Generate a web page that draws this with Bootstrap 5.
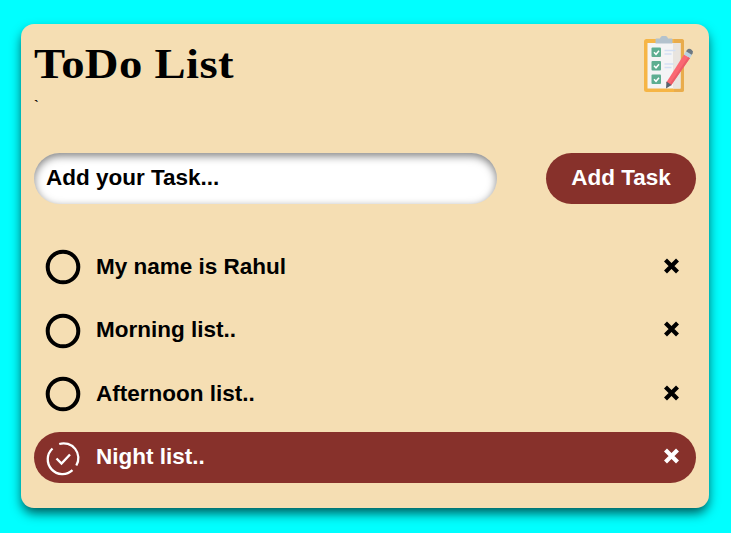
<!DOCTYPE html>
<html lang="en">
<head>
<meta charset="utf-8">
<meta name="viewport" content="width=device-width, initial-scale=1">
<title>ToDo List</title>
<link href="https://cdn.jsdelivr.net/npm/bootstrap@5.3.0/dist/css/bootstrap.min.css" rel="stylesheet">
<style>
body{background:#0ff;font-family:"Liberation Sans",Arial,sans-serif;color:#000;height:533px;overflow:hidden}
.todo-panel{margin:24px 22px 0 21px;height:484px;border-radius:13px;background:#f5deb3;padding:12px 13px 0;box-shadow:0 6px 12px -1px rgba(0,0,0,.68)}
.todo-head{height:60px}
.todo-title{font:bold 41.5px/56px "Liberation Serif",Georgia,serif;letter-spacing:.3px;transform:scaleX(1.125);transform-origin:left;white-space:nowrap}
.stray{font:bold 14px/20px "Liberation Serif",serif;height:57px}
.entry-field{width:463px;height:51px;border:0;border-radius:26px;background:#fff;padding:0 12px 1px;font-weight:bold;font-size:22.5px;color:#000;box-shadow:inset 0 3px 8px rgba(0,0,0,.5);outline:0}
.entry-field::placeholder{color:#000;opacity:1}
.add-task,.add-task:hover{width:150px;height:51px;border:0;border-radius:26px;background:#87312b;color:#fff;font-weight:bold;font-size:22.5px;padding:0 0 1px}
.task-list{margin-top:37.5px;gap:12.5px}
.task-row{height:51px;border-radius:26px;padding:0 16px 0 11px;font-weight:bold;font-size:22.5px;line-height:48px}
.task-row svg{display:block}
.task-row.done{background:#87312b;color:#fff}
.ring{width:36px;height:36px;margin-right:15px}
.task-text{padding-bottom:1px}
.cross{width:17px;height:16px;margin-bottom:3px}
.cross path{stroke:currentColor;stroke-width:4.2;stroke-linecap:butt}
</style>
<script src="https://cdn.jsdelivr.net/npm/bootstrap@5.3.0/dist/js/bootstrap.bundle.min.js"></script>
</head>
<body>
<main class="todo-panel">
  <header class="todo-head d-flex justify-content-between align-items-start">
    <h1 class="todo-title m-0">ToDo List</h1>
    <svg width="52" height="60" viewBox="0 0 52 60">
      <rect x="0" y="3" width="40" height="53" rx="2.500" fill="#f6b545"/>
      <path d="M30 3h7.500a2.500 2.500 0 0 1 2.500 2.500v48a2.500 2.500 0 0 1-2.500 2.500H30z" fill="#e9ac4c"/>
      <path d="M3.500 7h33v45.500h-33z" fill="#f4f4f5"/><path d="M29 7h7.500v45.500H29z" fill="#e8e4df"/>
      <path d="M11.500 7.500V3.500q0-1 1-1H16c1-4 7-4 8 0h3.500q1 0 1 1v4z" fill="#b3c2cd"/>
      <g fill="#5dae91"><rect x="7.500" y="11.500" width="9.500" height="9.500" rx="1"/><rect x="7.500" y="25" width="9.500" height="9.500" rx="1"/><rect x="7.500" y="38.500" width="9.500" height="9.500" rx="1"/></g>
      <path d="M10 16.300l2 2 3-3.500M10 29.800l2 2 3-3.500M10 43.300l2 2 3-3.500" fill="none" stroke="#fff" stroke-width="1.500"/>
      <path d="M20.500 14.500h11M20.500 18h7M20.500 28h9M20.500 31.500h7" stroke="#d3dff3" stroke-width="1.500"/>
      <path d="M22 47L40 18.500l6 3.500L27 49.500z" fill="#fa6873"/>
      <path d="M25.300 48.500L44.300 21l1.700 1L27 49.500z" fill="#ec5c68"/>
      <path d="M22.500 45.500l5 3.500-5.500 3.500z" fill="#57636e"/>
      <path d="M40 18.500l2-3.200 6 3.500-2 3.200z" fill="#b9d2e2"/>
      <path d="M42 15.300l1-1.400q1.500-2 3.500-.8l1.300.8q2 1.300.8 3.500l-.9 1.400z" fill="#6d7882"/>
    </svg>
  </header>
  <div class="stray">`</div>
  <form class="d-flex justify-content-between" onsubmit="return false">
    <input class="entry-field" type="text" placeholder="Add your Task..." aria-label="Task">
    <button class="btn add-task" type="submit">Add Task</button>
  </form>
  <div class="task-list d-flex flex-column">
    <div class="task-row d-flex align-items-center">
      <svg class="ring" viewBox="0 0 36 36"><circle cx="18" cy="18" r="15.300" fill="none" stroke="#000" stroke-width="4"/></svg>
      <span class="task-text flex-grow-1">My name is Rahul</span>
      <svg class="cross" viewBox="0 0 17 16"><path d="M2.500 2L14.500 14M14.500 2L2.500 14"/></svg>
    </div>
    <div class="task-row d-flex align-items-center">
      <svg class="ring" viewBox="0 0 36 36"><circle cx="18" cy="18" r="15.300" fill="none" stroke="#000" stroke-width="4"/></svg>
      <span class="task-text flex-grow-1">Morning list..</span>
      <svg class="cross" viewBox="0 0 17 16"><path d="M2.500 2L14.500 14M14.500 2L2.500 14"/></svg>
    </div>
    <div class="task-row d-flex align-items-center">
      <svg class="ring" viewBox="0 0 36 36"><circle cx="18" cy="18" r="15.300" fill="none" stroke="#000" stroke-width="4"/></svg>
      <span class="task-text flex-grow-1">Afternoon list..</span>
      <svg class="cross" viewBox="0 0 17 16"><path d="M2.500 2L14.500 14M14.500 2L2.500 14"/></svg>
    </div>
    <div class="task-row done d-flex align-items-center">
      <svg class="ring" viewBox="0 0 36 36" fill="none" stroke="#fff" stroke-width="2.300"><path d="M14.200 4A14.700 14.700 0 0 1 31.300 25.500M27.500 30.200A14.700 14.700 0 0 1 7.500 8.500"/><path d="M11.500 18.500l5 5 8.500-9" stroke-width="2.400"/></svg>
      <span class="task-text flex-grow-1">Night list..</span>
      <svg class="cross" viewBox="0 0 17 16"><path d="M2.500 2L14.500 14M14.500 2L2.500 14"/></svg>
    </div>
  </div>
</main>
</body>
</html>
